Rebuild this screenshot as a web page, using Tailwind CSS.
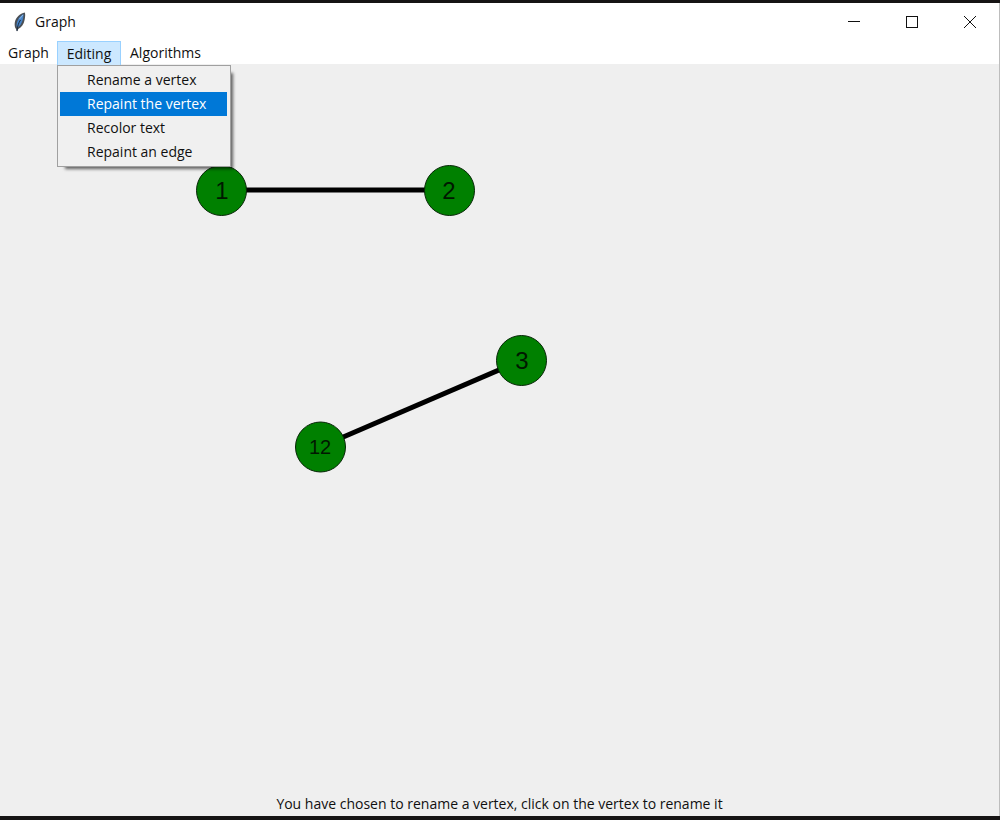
<!DOCTYPE html>
<html lang="en">
<head>
<meta charset="utf-8">
<title>Graph</title>
<script src="https://cdn.jsdelivr.net/npm/@tailwindcss/browser@4"></script>
</head>
<body class="flex h-screen flex-col overflow-hidden border-t-3 border-b-4 border-[#161414] bg-[#efefef] font-['Open_Sans','Noto_Sans',sans-serif] text-sm text-[#101010]">
  <div class="flex min-h-0 flex-1 flex-col border-r border-[#bdbdbd]">
    <header class="flex h-[38px] shrink-0 items-center bg-white pl-3">
      <svg class="h-5 w-4" viewBox="0 0 16 20" aria-hidden="true">
        <path d="M12.800 0.500C8 1 3.500 6 2.800 10.500C2.400 13 2.800 15.500 4 17L5 19.500L6.300 17C9.500 15.500 11.800 12 12.600 8C13.200 5 13.500 2 12.800 0.500Z" fill="#4a4f55"/>
        <path d="M11.500 2C8 4 4.500 8 4.500 14.500L6.500 15C9.800 12 11.600 7 11.500 2Z" fill="#4583c8"/>
        <path d="M8.500 8C6.500 11 5.500 14 5 19" fill="none" stroke="#1a2c40" stroke-width="1"/>
        <path d="M11 3L7.500 7" stroke="#8fb8e4" stroke-width="1"/>
      </svg>
      <h1 class="ml-[7px] flex-1">Graph</h1>
      <div class="flex h-full">
        <button class="flex w-[58px] items-center justify-center" aria-label="Minimize">
          <svg class="size-3" viewBox="0 0 12 12"><path d="M0 5.500H12" stroke="#111" fill="none"/></svg>
        </button>
        <button class="flex w-[58px] items-center justify-center" aria-label="Maximize">
          <svg class="size-3" viewBox="0 0 12 12"><rect x=".5" y=".5" width="11" height="11" stroke="#111" fill="none"/></svg>
        </button>
        <button class="flex w-[58px] items-center justify-center" aria-label="Close">
          <svg class="size-3" viewBox="0 0 12 12"><path d="M0 0L12 12M12 0L0 12" stroke="#111" fill="none"/></svg>
        </button>
      </div>
    </header>
    <nav class="flex h-[23px] shrink-0 bg-white">
      <button class="h-6 w-[57px]">Graph</button>
      <div class="relative">
        <button class="h-6 w-16 border border-b-0 border-[#99d1ff] bg-[#cce8ff]" aria-expanded="true">Editing</button>
        <div class="absolute top-6 left-0 z-10 flex w-[174px] flex-col border border-[#a0a0a0] bg-[#f0f0f0] p-[2px] pr-[3px] shadow-[5px_5px_3px_-3px_#00000099]" role="menu">
          <button class="h-6 pl-[27px] text-left" role="menuitem">Rename a vertex</button>
          <button class="h-6 bg-[#0078d7] pl-[27px] text-left text-white" role="menuitem">Repaint the vertex</button>
          <button class="h-6 pl-[27px] text-left" role="menuitem">Recolor text</button>
          <button class="h-6 pl-[27px] text-left" role="menuitem">Repaint an edge</button>
        </div>
      </div>
      <button class="h-6 px-[9px]">Algorithms</button>
    </nav>
    <main class="min-h-0 flex-1 overflow-hidden">
      <svg width="100%" height="100%" class="block font-['Liberation_Sans',Arial,sans-serif]" aria-label="Graph drawing">
        <g stroke="#000" stroke-width="5">
          <path d="M222 126H449"/>
          <path d="M320 383L522 296"/>
        </g>
        <g fill="#008000" stroke="#062606" stroke-width="1">
          <circle cx="221.500" cy="126.500" r="25"/>
          <circle cx="449.500" cy="126.500" r="25"/>
          <circle cx="521.500" cy="296.500" r="25"/>
          <circle cx="320.500" cy="383" r="25"/>
        </g>
        <g fill="#001800" text-anchor="middle" font-size="24">
          <text x="222" y="135">1</text>
          <text x="449" y="135">2</text>
          <text x="522" y="305">3</text>
          <text x="320" y="390" font-size="20">12</text>
        </g>
      </svg>
    </main>
    <footer class="flex h-6 shrink-0 items-center justify-center" role="status">You have chosen to rename a vertex, click on the vertex to rename it</footer>
  </div>
</body>
</html>
